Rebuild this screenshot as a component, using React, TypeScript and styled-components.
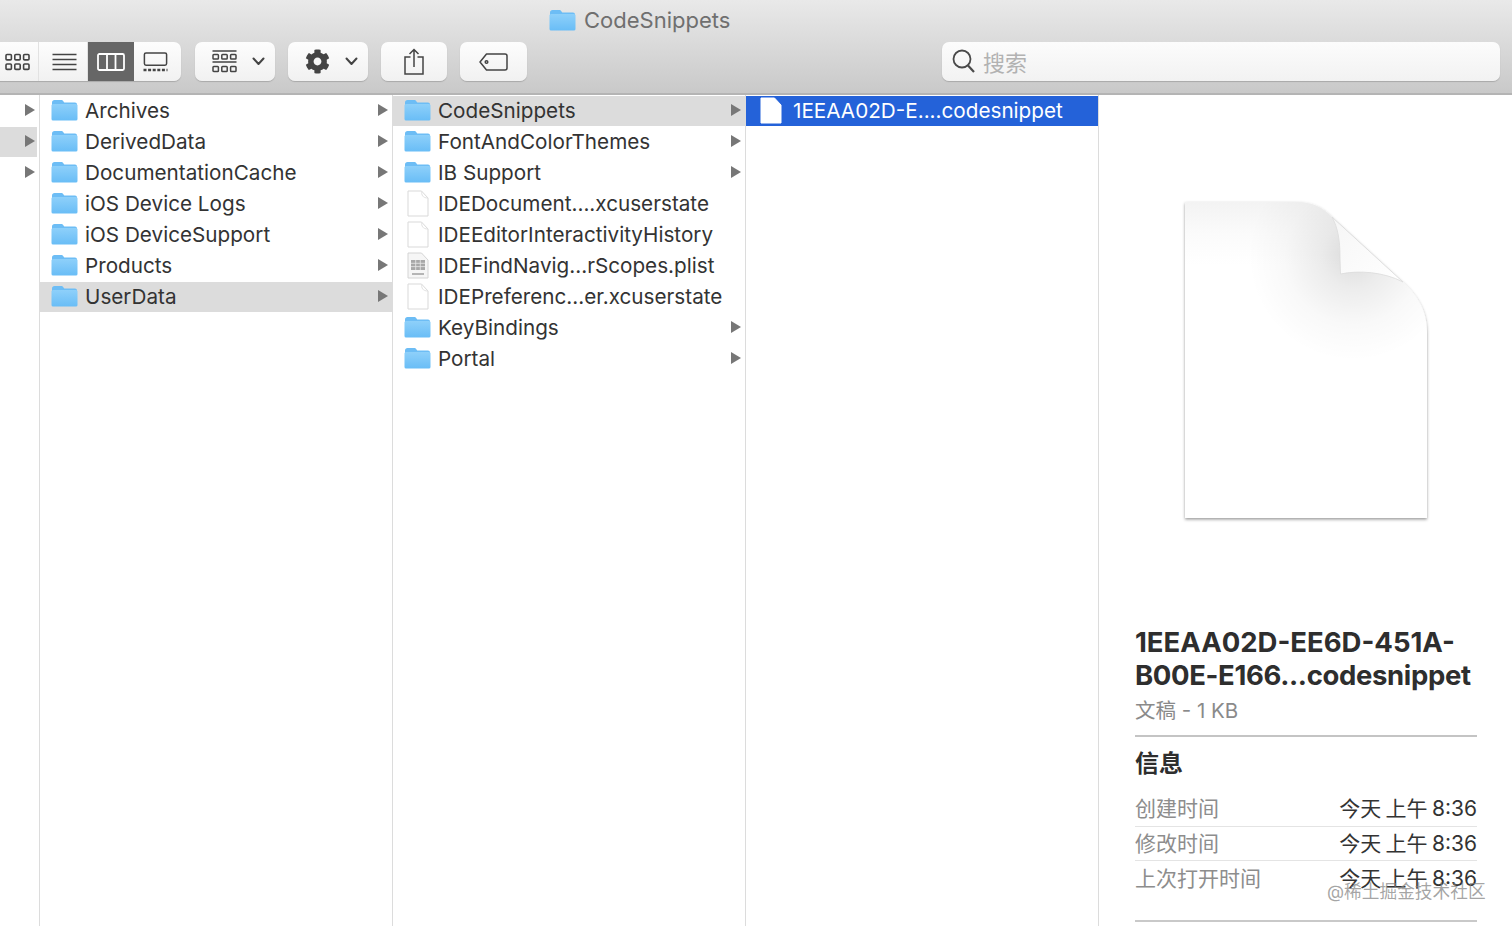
import React from "react";
import styled, { createGlobalStyle } from "styled-components";
import { FaCog } from "react-icons/fa";

const GlobalStyle = createGlobalStyle`
  html, body {
    margin: 0;
    padding: 0;
    background: #fff;
    overflow: hidden;
  }
`;

const Window = styled.div`
  width: 1512px;
  height: 926px;
  display: flex;
  flex-direction: column;
  position: relative;
  overflow: hidden;
  background: #fff;
  color: #333;
  font-family: Inter, "Noto Sans CJK SC", sans-serif;
`;

const Toolbar = styled.div`
  height: 93px;
  flex: none;
  display: flex;
  flex-direction: column;
  background: linear-gradient(#e9e9e9, #c9c9c9);
  border-top: 1px solid #f0f0f0;
  border-bottom: 2px solid #b4b4b4;
  box-sizing: content-box;
  margin-top: -1px;
`;

const TitleRow = styled.div`
  height: 42px;
  display: flex;
  align-items: center;
  gap: 8px;
  padding-left: 549px;
  padding-bottom: 3px;
  box-sizing: border-box;
  font-size: 22px;
  color: #6f6f6f;
`;

const ToolRow = styled.div`
  display: flex;
  align-items: flex-start;
  gap: 13px;
`;

const Segments = styled.div`
  display: flex;
  height: 39px;
  margin-left: -8px;
  margin-right: 1px;
  background: linear-gradient(#fdfdfd, #f1f1f1);
  border-radius: 7px;
  overflow: hidden;
  box-shadow: 0 1px 1px #a9a9a9;
`;

const Segment = styled.div<{ $width: number; $active?: boolean; $left?: number; $right?: number }>`
  width: ${(props) => props.$width}px;
  padding-left: ${(props) => props.$left ?? 0}px;
  padding-right: ${(props) => props.$right ?? 0}px;
  display: flex;
  align-items: center;
  justify-content: center;
  background: ${(props) => (props.$active ? "#666" : "transparent")};
  color: ${(props) => (props.$active ? "#fff" : "#444")};
  border-right: ${(props) => (props.$active ? "0" : "1px solid #e2e2e2")};
  box-sizing: border-box;
  &:last-child {
    border-right: 0;
  }
`;

const ToolButton = styled.div<{ $width: number }>`
  width: ${(props) => props.$width}px;
  height: 39px;
  display: flex;
  align-items: center;
  justify-content: center;
  color: #444;
  background: linear-gradient(#fdfdfd, #f1f1f1);
  border-radius: 7px;
  box-shadow: 0 1px 1px #a9a9a9;
`;

const MenuButton = styled(ToolButton)`
  justify-content: flex-start;
  padding-left: 17px;
  gap: 15px;
  box-sizing: border-box;
`;

const SearchBox = styled.div`
  width: 558px;
  height: 39px;
  margin-left: 402px;
  display: flex;
  align-items: center;
  gap: 8px;
  padding-left: 10px;
  padding-bottom: 1px;
  box-sizing: border-box;
  font-size: 22px;
  color: #b2b2b2;
  background: linear-gradient(#fcfcfc, #f2f2f2);
  border-radius: 7px;
  box-shadow: 0 1px 1px #a9a9a9;
`;

const Browser = styled.div`
  flex: 1;
  display: flex;
  min-height: 0;
`;

const Column = styled.div<{ $width: number }>`
  width: ${(props) => props.$width}px;
  flex: none;
  box-sizing: border-box;
  padding-top: 1px;
  border-right: 1px solid #dcdcdc;
`;

const Row = styled.div<{ $state?: "muted" | "selected" }>`
  height: 31px;
  display: flex;
  align-items: center;
  box-sizing: border-box;
  padding-bottom: 2px;
  border-bottom: 1px solid transparent;
  background-clip: padding-box;
  font-size: 20.7px;
  white-space: nowrap;
  background-color: ${(props) =>
    props.$state === "selected"
      ? "#2462d9"
      : props.$state === "muted"
      ? "#dcdcdc"
      : "transparent"};
  color: ${(props) => (props.$state === "selected" ? "#fff" : "#333")};
`;

const IconSlot = styled.div`
  width: 27px;
  height: 28px;
  margin-left: 11px;
  margin-right: 7px;
  flex: none;
  display: flex;
  align-items: center;
  justify-content: center;
`;

const RowName = styled.span`
  flex: 1;
`;

const SelectedName = styled(RowName)`
  padding-left: 2px;
`;

const Arrow = styled.i`
  flex: none;
  width: 0;
  height: 0;
  margin-right: 4px;
  border-left: 10px solid #777;
  border-top: 6.5px solid transparent;
  border-bottom: 6.5px solid transparent;
`;

const StubRow = styled(Row)`
  justify-content: flex-end;
  margin-right: 2px;
  & > i {
    margin-right: 2px;
  }
`;

const Preview = styled.div`
  flex: 1;
  min-width: 0;
  box-sizing: border-box;
  padding: 103px 35px 0 36px;
  display: flex;
  flex-direction: column;
`;

const BigDoc = styled.svg`
  display: block;
  flex: none;
  align-self: center;
  margin-bottom: 102px;
`;

const FileName = styled.div<{ $tight?: boolean }>`
  flex: none;
  font-size: 27.5px;
  line-height: 33px;
  font-weight: 700;
  color: #2e2e2e;
  white-space: nowrap;
  letter-spacing: ${(props) => (props.$tight ? "-0.35px" : "0")};
`;

const FileKind = styled.div`
  flex: none;
  margin-top: 5px;
  padding-bottom: 10px;
  font-size: 20.5px;
  line-height: 28px;
  color: #8a8a8a;
  border-bottom: 2px solid #c4c4c4;
`;

const InfoTitle = styled.div`
  flex: none;
  margin-top: 12px;
  margin-bottom: 13px;
  font-size: 24px;
  line-height: 30px;
  font-weight: 700;
  color: #2e2e2e;
`;

const InfoList = styled.div`
  flex: none;
`;

const InfoRow = styled.div`
  height: 34.5px;
  display: flex;
  align-items: center;
  justify-content: space-between;
  padding-bottom: 3px;
  font-size: 21px;
  word-spacing: -1.5px;
  color: #333;
  border-bottom: 1px solid #e4e4e4;
  box-sizing: border-box;
  &:last-child {
    border-bottom: 0;
  }
`;

const InfoLabel = styled.span`
  color: #8d8d8d;
`;

const BottomRule = styled.div`
  flex: none;
  margin-top: 24px;
  border-top: 2px solid #c9c9c9;
`;

const Watermark = styled.div`
  position: absolute;
  left: 1327px;
  top: 880px;
  font-size: 17.7px;
  line-height: 24px;
  color: rgba(130, 130, 130, 0.72);
  white-space: nowrap;
`;

const Folder: React.FC<{ width?: number; height?: number }> = ({ width = 27, height = 22 }) => (
  <svg width={width} height={height} viewBox="0 0 27 22">
    <defs>
      <linearGradient id="folderBody" x1="0" y1="0" x2="0" y2="1">
        <stop offset="0" stopColor="#8ed0fa" />
        <stop offset="1" stopColor="#69bdf6" />
      </linearGradient>
    </defs>
    <path d="M1 3.500C1 2 2 1 3.500 1h6.500c1.200 0 1.800.5 2.500 1.400l.8 1.100H24c1.200 0 2 .8 2 2V6H1z" fill="#6dbdf5" />
    <rect x="0.500" y="5" width="26" height="16.500" rx="1.600" fill="url(#folderBody)" />
  </svg>
);

const DocIcon: React.FC<{ selected?: boolean }> = ({ selected }) => (
  <svg width="22" height="27" viewBox="0 0 22 27">
    <path
      d="M1 1h13.500L21 8v18H1z"
      fill="#fff"
      stroke={selected ? "#fff" : "#d9d9d9"}
      strokeWidth="1"
      strokeLinejoin="round"
    />
    {!selected && <path d="M14.500 1c0 4 1 7 6.500 7" fill="none" stroke="#e3e3e3" />}
  </svg>
);

const PlistIcon: React.FC = () => (
  <svg width="22" height="27" viewBox="0 0 22 27">
    <path d="M1 1h13.500L21 8v18H1z" fill="#f6f6f6" stroke="#d4d4d4" strokeLinejoin="round" />
    <rect x="4" y="8" width="14" height="10" fill="#a8a8a8" />
    <path d="M4 11.300h14M4 14.600h14M8.700 8v10M13.300 8v10" stroke="#e8e8e8" strokeWidth="0.800" />
    <rect x="5" y="21" width="12" height="2" fill="#b5b5b5" />
  </svg>
);

const GridGlyph: React.FC = () => (
  <svg width="25" height="18" viewBox="0 0 25 18" fill="none" stroke="currentColor" strokeWidth="1.600">
    <rect x="1" y="1.500" width="5.400" height="5.400" rx="1" />
    <rect x="9.800" y="1.500" width="5.400" height="5.400" rx="1" />
    <rect x="18.600" y="1.500" width="5.400" height="5.400" rx="1" />
    <rect x="1" y="11" width="5.400" height="5.400" rx="1" />
    <rect x="9.800" y="11" width="5.400" height="5.400" rx="1" />
    <rect x="18.600" y="11" width="5.400" height="5.400" rx="1" />
  </svg>
);

const ListGlyph: React.FC = () => (
  <svg width="25" height="18" viewBox="0 0 25 18" stroke="currentColor" strokeWidth="1.500">
    <path d="M0.500 1.500h24M0.500 6.500h24M0.500 11.500h24M0.500 16.500h24" />
  </svg>
);

const ColumnsGlyph: React.FC = () => (
  <svg width="28" height="18" viewBox="0 0 28 18" fill="none" stroke="currentColor" strokeWidth="1.800">
    <rect x="1" y="1" width="26" height="16" rx="1.500" />
    <path d="M10 1v16M18.500 1v16" />
  </svg>
);

const GalleryGlyph: React.FC = () => (
  <svg width="25" height="20" viewBox="0 0 25 20" fill="none" stroke="currentColor" strokeWidth="1.500">
    <path d="M3 1h19q1.600 0 1.600 1.600v9q0 1.600-1.600 1.600H3q-1.600 0-1.600-1.600v-9Q1.400 1 3 1z" />
    <path d="M0.500 18h24" strokeWidth="2.600" strokeDasharray="3 1.600" />
  </svg>
);

const ArrangeGlyph: React.FC = () => (
  <svg width="25" height="23" viewBox="0 0 25 23" fill="none" stroke="currentColor" strokeWidth="1.500">
    <path d="M0.500 1h24M0.500 12h24" />
    <rect x="1" y="4.500" width="5.400" height="4.600" rx="0.800" />
    <rect x="9.800" y="4.500" width="5.400" height="4.600" rx="0.800" />
    <rect x="18.600" y="4.500" width="5.400" height="4.600" rx="0.800" />
    <rect x="1" y="16.500" width="5.400" height="5" rx="0.800" />
    <rect x="9.800" y="16.500" width="5.400" height="5" rx="0.800" />
    <rect x="18.600" y="16.500" width="5.400" height="5" rx="0.800" />
  </svg>
);

const Chevron: React.FC = () => (
  <svg width="13" height="9" viewBox="0 0 13 9" fill="none" stroke="currentColor" strokeWidth="2" strokeLinecap="round" strokeLinejoin="round">
    <path d="M1.500 1.500l5 5.500 5-5.500" />
  </svg>
);

const ShareGlyph: React.FC = () => (
  <svg width="20" height="27" viewBox="0 0 20 27" fill="none" stroke="currentColor" strokeWidth="1.500">
    <path d="M6.500 9H1v17h18V9h-5.500" />
    <path d="M10 19V1.500M5.500 6L10 1.500 14.500 6" />
  </svg>
);

const TagGlyph: React.FC = () => (
  <svg width="29" height="18" viewBox="0 0 29 18" fill="none" stroke="currentColor" strokeWidth="1.500">
    <path d="M7.500 1H26q2 0 2 2v12q0 2-2 2H7.500L1 9z" strokeLinejoin="round" />
    <circle cx="7.500" cy="9" r="1.300" />
  </svg>
);

const SearchGlyph: React.FC = () => (
  <svg width="23" height="24" viewBox="0 0 23 24" fill="none" stroke="#4a4a4a" strokeWidth="1.800">
    <circle cx="10" cy="10" r="8.500" />
    <path d="M16 16.500l6 6.500" strokeWidth="2.200" />
  </svg>
);

const pageOutline = "M4 4H116C130 4 142 9 151 19L222 84C236 97 246 112 246 134V320H4z";

const PageIcon: React.FC = () => (
  <BigDoc width="250" height="326" viewBox="0 0 250 326">
    <defs>
      <linearGradient id="pageTop" x1="0" y1="0" x2="0" y2="1">
        <stop offset="0" stopColor="#f3f3f3" />
        <stop offset="0.100" stopColor="#fbfbfb" />
        <stop offset="0.200" stopColor="#ffffff" />
      </linearGradient>
      <radialGradient id="pageCurl" gradientUnits="userSpaceOnUse" cx="172" cy="58" r="105">
        <stop offset="0" stopColor="#000" stopOpacity="0.140" />
        <stop offset="0.300" stopColor="#000" stopOpacity="0.075" />
        <stop offset="0.650" stopColor="#000" stopOpacity="0.025" />
        <stop offset="1" stopColor="#000" stopOpacity="0" />
      </radialGradient>
      <linearGradient id="pageFold" x1="0" y1="0" x2="1" y2="1">
        <stop offset="0" stopColor="#f6f6f6" />
        <stop offset="1" stopColor="#ffffff" />
      </linearGradient>
      <filter id="pageShadow" x="-5%" y="-5%" width="110%" height="110%">
        <feDropShadow dx="0" dy="1.500" stdDeviation="1.400" floodColor="#000" floodOpacity="0.400" />
      </filter>
    </defs>
    <path d={pageOutline} fill="url(#pageTop)" filter="url(#pageShadow)" />
    <path d={pageOutline} fill="url(#pageCurl)" />
    <path d="M151 19C157 30 159 42 159 60L159.500 76C178 72 203 74 222 84z" fill="url(#pageFold)" />
    <path d="M151 19C157 30 159 42 159 60L159.500 76C178 72 203 74 222 84" fill="none" stroke="#dcdcdc" strokeWidth="0.800" />
    <path d="M151 19L222 84" fill="none" stroke="#dedede" strokeWidth="1" />
  </BigDoc>
);

type Entry = { name: string; kind: "folder" | "doc" | "plist"; state?: "muted" | "selected" };

const derivedEntries: Entry[] = [
  { name: "Archives", kind: "folder" },
  { name: "DerivedData", kind: "folder" },
  { name: "DocumentationCache", kind: "folder" },
  { name: "iOS Device Logs", kind: "folder" },
  { name: "iOS DeviceSupport", kind: "folder" },
  { name: "Products", kind: "folder" },
  { name: "UserData", kind: "folder", state: "muted" },
];

const userDataEntries: Entry[] = [
  { name: "CodeSnippets", kind: "folder", state: "muted" },
  { name: "FontAndColorThemes", kind: "folder" },
  { name: "IB Support", kind: "folder" },
  { name: "IDEDocument....xcuserstate", kind: "doc" },
  { name: "IDEEditorInteractivityHistory", kind: "doc" },
  { name: "IDEFindNavig...rScopes.plist", kind: "plist" },
  { name: "IDEPreferenc...er.xcuserstate", kind: "doc" },
  { name: "KeyBindings", kind: "folder" },
  { name: "Portal", kind: "folder" },
];

const infoRows = [
  { label: "创建时间", value: "今天 上午 8:36" },
  { label: "修改时间", value: "今天 上午 8:36" },
  { label: "上次打开时间", value: "今天 上午 8:36" },
];

const EntryRow: React.FC<{ entry: Entry }> = ({ entry }) => (
  <Row $state={entry.state}>
    <IconSlot>
      {entry.kind === "folder" && <Folder />}
      {entry.kind === "doc" && <DocIcon />}
      {entry.kind === "plist" && <PlistIcon />}
    </IconSlot>
    <RowName>{entry.name}</RowName>
    {entry.kind === "folder" && <Arrow />}
  </Row>
);

const App: React.FC = () => (
  <Window>
    <GlobalStyle />
    <Toolbar>
      <TitleRow>
        <Folder />
        CodeSnippets
      </TitleRow>
      <ToolRow>
        <Segments>
          <Segment $width={47} $left={5}>
            <GridGlyph />
          </Segment>
          <Segment $width={49} $left={2}>
            <ListGlyph />
          </Segment>
          <Segment $width={46} $active>
            <ColumnsGlyph />
          </Segment>
          <Segment $width={47} $right={4}>
            <GalleryGlyph />
          </Segment>
        </Segments>
        <MenuButton $width={80}>
          <ArrangeGlyph />
          <Chevron />
        </MenuButton>
        <MenuButton $width={80}>
          <FaCog size={25} />
          <Chevron />
        </MenuButton>
        <ToolButton $width={66}>
          <ShareGlyph />
        </ToolButton>
        <ToolButton $width={67}>
          <TagGlyph />
        </ToolButton>
        <SearchBox>
          <SearchGlyph />
          搜索
        </SearchBox>
      </ToolRow>
    </Toolbar>
    <Browser>
      <Column $width={40}>
        <StubRow>
          <Arrow />
        </StubRow>
        <StubRow $state="muted">
          <Arrow />
        </StubRow>
        <StubRow>
          <Arrow />
        </StubRow>
      </Column>
      <Column $width={353}>
        {derivedEntries.map((entry) => (
          <EntryRow key={entry.name} entry={entry} />
        ))}
      </Column>
      <Column $width={353}>
        {userDataEntries.map((entry) => (
          <EntryRow key={entry.name} entry={entry} />
        ))}
      </Column>
      <Column $width={353}>
        <Row $state="selected">
          <IconSlot>
            <DocIcon selected />
          </IconSlot>
          <SelectedName>1EEAA02D-E....codesnippet</SelectedName>
        </Row>
      </Column>
      <Preview>
        <PageIcon />
        <FileName>1EEAA02D-EE6D-451A-</FileName>
        <FileName $tight>B00E-E166...codesnippet</FileName>
        <FileKind>文稿 - 1 KB</FileKind>
        <InfoTitle>信息</InfoTitle>
        <InfoList>
          {infoRows.map((row) => (
            <InfoRow key={row.label}>
              <InfoLabel>{row.label}</InfoLabel>
              <span>{row.value}</span>
            </InfoRow>
          ))}
        </InfoList>
        <BottomRule />
      </Preview>
    </Browser>
    <Watermark>@稀土掘金技术社区</Watermark>
  </Window>
);

export default App;
